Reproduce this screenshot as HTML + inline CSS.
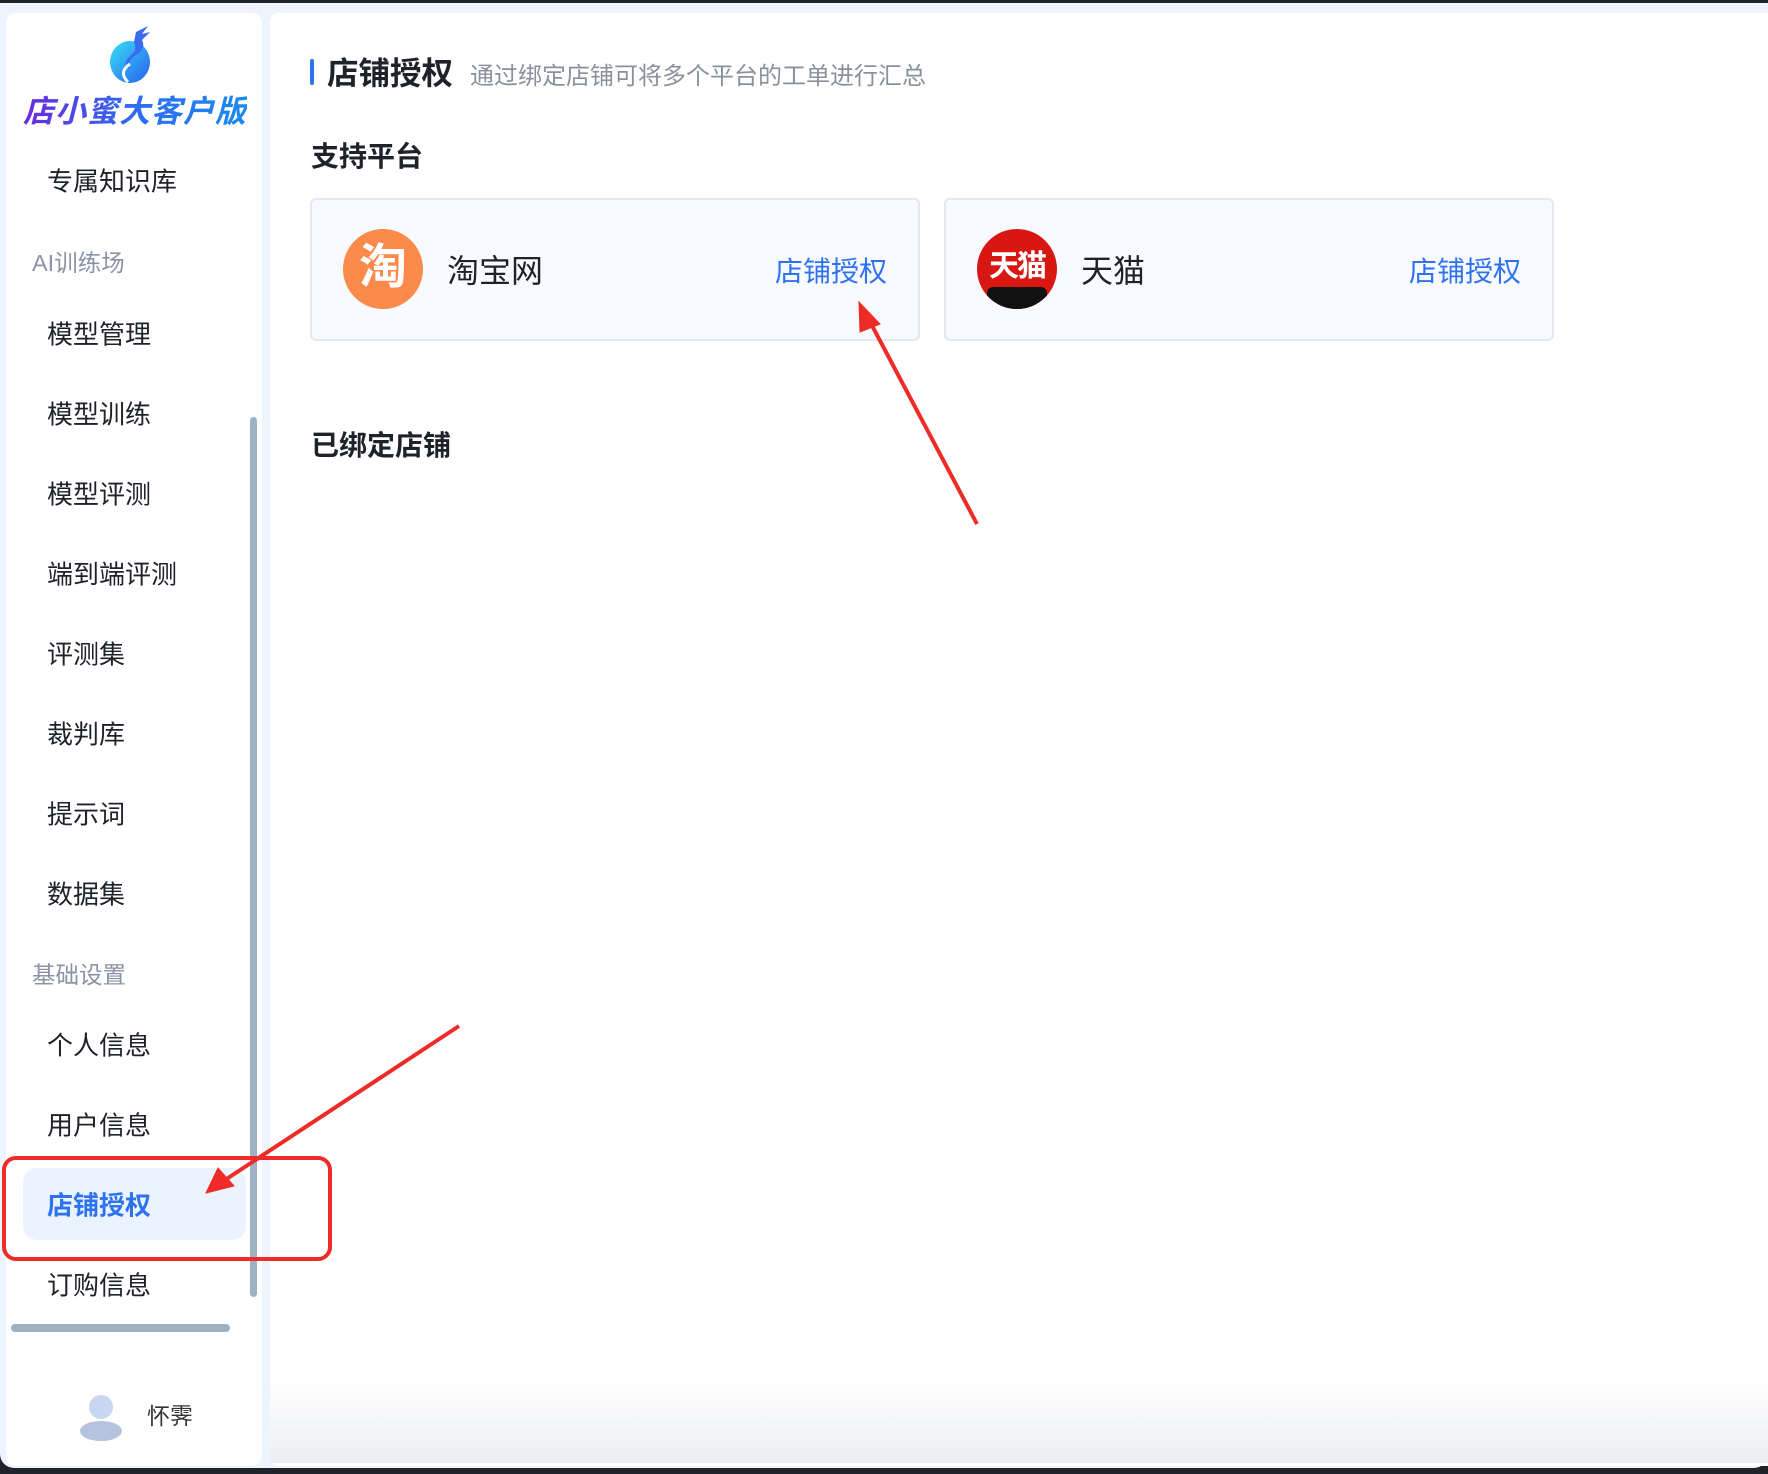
<!DOCTYPE html>
<html><head><meta charset="utf-8"><style>
*{margin:0;padding:0;box-sizing:border-box}
body{width:1768px;height:1474px;background:#1e2428;font-family:"Liberation Sans","Noto Sans CJK SC",sans-serif;position:relative;overflow:hidden}
.win{position:absolute;left:0;top:3px;width:1768px;height:1465px;background:#eef4fd;border-radius:0 0 14px 14px}
.side{position:absolute;left:6px;top:10px;width:256px;height:1453px;background:#fff;border-radius:10px}
.main{position:absolute;left:270px;top:10px;width:1498px;height:1453px;background:#fff;border-radius:8px 0 0 8px}
.abs{position:absolute;white-space:nowrap}
.mi{position:absolute;left:47px;font-size:26px;color:#1f2329;transform:translateY(-50%)}
.sec{position:absolute;left:32px;font-size:23.5px;color:#8a94a6;transform:translateY(-50%)}
.card{position:absolute;top:198px;height:143px;width:610px;background:#f8faff;border:2px solid #e4e8f0;border-radius:6px}
.link{position:absolute;font-size:28px;color:#2e72f0;top:50%;transform:translateY(-50%)}
</style></head><body>
<div class="win">
<div class="side"></div>
<div class="main"></div>
</div>
<svg class="abs" style="left:108px;top:24px" width="50" height="60" viewBox="0 0 50 60">
<defs><linearGradient id="g" x1="0" y1="0" x2="1" y2="1"><stop offset="0" stop-color="#36e0f5"/><stop offset="1" stop-color="#2a5ff0"/></linearGradient></defs>
<ellipse cx="22" cy="38" rx="20" ry="21" fill="url(#g)"/>
<path d="M28 8 L40 2 L34 10 L42 8 L34 16 Q38 24 30 30 Q18 36 22 46 Q14 40 22 32 Q30 26 26 18 Z" fill="#3a6cf2"/>
<path d="M20 58 Q10 48 22 40" stroke="#fff" stroke-width="3" fill="none"/>
</svg>
<div class="abs" style="left:23px;top:86px;font-size:31px;font-style:italic;font-weight:bold;letter-spacing:1px;background:linear-gradient(90deg,#6a2ae0,#2f6cf2 50%,#1a8af0);-webkit-background-clip:text;color:transparent">店小蜜大客户版</div>

<div class="mi" style="top:180px">专属知识库</div>
<div class="sec" style="top:261px">AI训练场</div>
<div class="mi" style="top:333px">模型管理</div>
<div class="mi" style="top:413px">模型训练</div>
<div class="mi" style="top:493px">模型评测</div>
<div class="mi" style="top:573px">端到端评测</div>
<div class="mi" style="top:653px">评测集</div>
<div class="mi" style="top:733px">裁判库</div>
<div class="mi" style="top:813px">提示词</div>
<div class="mi" style="top:893px">数据集</div>
<div class="sec" style="top:973px">基础设置</div>
<div class="mi" style="top:1044px">个人信息</div>
<div class="mi" style="top:1124px">用户信息</div>
<div class="abs" style="left:23px;top:1168px;width:223px;height:72px;background:#ebf3ff;border-radius:14px"></div>
<div class="mi" style="top:1204px;color:#2e72f0;font-weight:bold">店铺授权</div>
<div class="mi" style="top:1284px">订购信息</div>
<div class="abs" style="left:250px;top:417px;width:7px;height:880px;background:#9fb2c4;border-radius:4px"></div>
<div class="abs" style="left:11px;top:1324px;width:219px;height:8px;background:#9fb2c4;border-radius:4px"></div>
<div class="abs" style="left:2px;top:1156px;width:330px;height:105px;border:4px solid #ee2b26;border-radius:14px"></div>
<div class="abs" style="left:89px;top:1395px;width:24px;height:24px;border-radius:50%;background:#c8d6f2"></div>
<div class="abs" style="left:80px;top:1421px;width:42px;height:20px;border-radius:50%;background:#b6c3dc"></div>
<div class="abs" style="left:147px;top:1397px;font-size:23px;color:#333">怀霁</div>

<div class="abs" style="left:310px;top:59px;width:4px;height:26px;background:#2e72f0;border-radius:2px"></div>
<div class="abs" style="left:327px;top:48px;font-size:31.5px;font-weight:bold;color:#1f2329">店铺授权</div>
<div class="abs" style="left:470px;top:56px;font-size:24px;color:#8a909c">通过绑定店铺可将多个平台的工单进行汇总</div>
<div class="abs" style="left:311px;top:135px;font-size:28px;font-weight:bold;color:#1f2329">支持平台</div>

<div class="card" style="left:310px">
<div class="abs" style="left:31px;top:29px;width:80px;height:80px;border-radius:50%;background:#fb8a4b;color:#fff;font-size:48px;font-weight:bold;text-align:center;line-height:78px">淘</div>
<div class="abs" style="left:135px;top:50%;transform:translateY(-52%);font-size:32px;color:#1f2329">淘宝网</div>
<div class="link" style="right:31px">店铺授权</div>
</div>
<div class="card" style="left:944px">
<div class="abs" style="left:31px;top:29px;width:80px;height:80px;border-radius:50%;background:#d81612;overflow:hidden">
<div class="abs" style="left:0;top:12px;width:80px;text-align:center;color:#fff;font-size:30px;font-weight:bold;letter-spacing:-2px">天猫</div>
<div class="abs" style="left:10px;top:58px;width:60px;height:22px;background:#111;border-radius:6px 6px 0 0"></div>
</div>
<div class="abs" style="left:135px;top:50%;transform:translateY(-52%);font-size:32px;color:#1f2329">天猫</div>
<div class="link" style="right:31px">店铺授权</div>
</div>

<div class="abs" style="left:311px;top:424px;font-size:28px;font-weight:bold;color:#1f2329">已绑定店铺</div>

<div class="abs" style="left:270px;top:1380px;width:1498px;height:83px;background:linear-gradient(180deg,rgba(255,255,255,0),#eceef1)"></div>

<svg class="abs" style="left:0;top:0" width="1768" height="1474">
<g stroke="#ee2b26" stroke-width="4" fill="#ee2b26">
<line x1="977" y1="524" x2="868" y2="318"/>
<polygon points="859,302 880,324 860,332" stroke-width="1"/>
<line x1="459" y1="1026" x2="222" y2="1182"/>
<polygon points="206,1193 218,1168 234,1186" stroke-width="1"/>
</g>
</svg>
</body></html>
